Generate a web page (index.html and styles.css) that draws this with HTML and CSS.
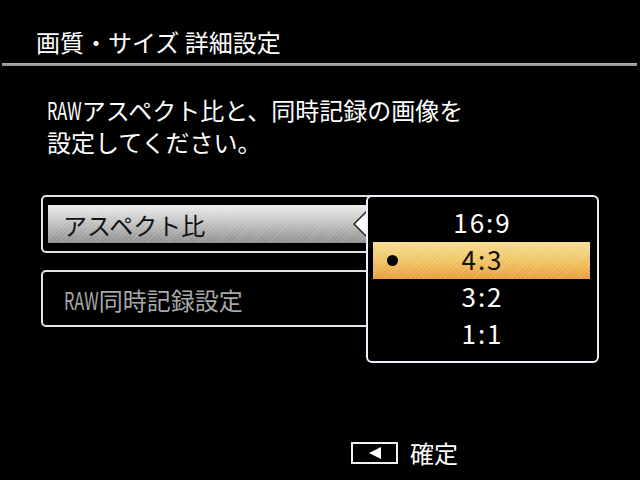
FILE: index.html
```html
<!DOCTYPE html>
<html lang="ja">
<head>
  <meta charset="UTF-8">
  <meta name="viewport" content="width=device-width, initial-scale=1.0">
  <title>画質・サイズ 詳細設定</title>
  <link rel="stylesheet" href="styles.css">
</head>
<body>
  <div class="screen">
    <header class="title-bar">
      <h1>画質・サイズ 詳細設定</h1>
    </header>
    <div class="rule"></div>

    <p class="intro"><span class="hw">RAW</span>アスペクト比と、同時記録の画像を<br>設定してください。</p>

    <div class="menu">
      <div class="item selected">
        <div class="item-bar">アスペクト比</div>
      </div>
      <div class="item">
        <div class="item-bar dim"><span class="hw">RAW</span>同時記録設定</div>
      </div>

      <!-- pointer from the selected row into the popup -->
      <svg class="pointer" width="16" height="28" viewBox="0 0 16 28">
        <path d="M15 1 L2 14 L15 27 Z" fill="#fff" stroke="#222" stroke-width="1.5" stroke-linejoin="round"/>
      </svg>

      <div class="popup">
        <div class="option">16:9</div>
        <div class="option active"><span class="dot"></span>4:3</div>
        <div class="option">3:2</div>
        <div class="option">1:1</div>
      </div>
    </div>

    <footer class="hint">
      <span class="key">
        <svg width="14" height="14" viewBox="0 0 14 14"><path d="M1 7 L13 1 L13 13 Z" fill="#fff"/></svg>
      </span>
      <span class="hint-label">確定</span>
    </footer>
  </div>
</body>
</html>
```

FILE: styles.css
```css
body {
  margin: 0;
  background-color: #000;
  color: #f2f2f2;
  font-family: "Noto Sans CJK JP", "Noto Sans", sans-serif;
}

.screen {
  width: 640px;
  height: 480px;
  overflow: hidden;
  display: flex;
  flex-direction: column;
}

.title-bar {
  padding: 30px 0 0 36px;
}

h1 {
  margin: 0;
  font-size: 24px;
  line-height: 24px;
  font-weight: normal;
  color: #fff;
}

.rule {
  margin: 9px 3px 0 2px;
  height: 3px;
  background: linear-gradient(#b4b0b8, #8a8790);
}

.intro {
  margin: 28px 0 0 47px;
  font-size: 24px;
  line-height: 32px;
  color: #fff;
}

/* narrow half-width latin like the camera font */
.hw {
  display: inline-block;
  transform: scaleX(0.68);
  transform-origin: left center;
  margin-right: -16px;
}

.menu {
  position: relative;
  margin: 37px 0 0 41px;
  display: flex;
  flex-direction: column;
  gap: 17px;
}

.item {
  width: 339px;
  box-sizing: border-box;
  border: 2px solid #e4e4e4;
  border-radius: 5px;
  padding: 8px 0 8px 5px;
}

.item + .item {
  height: 57px;
}

.item-bar {
  height: 38px;
  display: flex;
  align-items: center;
  padding-left: 15px;
  font-size: 24px;
  color: #111;
}

.selected .item-bar {
  background:
    repeating-linear-gradient(135deg, rgba(255, 255, 255, 0.14) 0 1px, transparent 1px 3px),
    linear-gradient(#ececec, #c4c4c4 45%, #8e8e8e);
}

.item-bar.dim {
  color: #a8a8a8;
  padding-left: 16px;
}

.pointer {
  position: absolute;
  left: 311px;
  top: 15px;
}

.popup {
  position: absolute;
  left: 325px;
  top: 0;
  width: 233px;
  height: 168px;
  box-sizing: border-box;
  border: 2px solid #eef0ff;
  border-radius: 6px;
  background-color: #000;
  padding: 8px 7px 0 5px;
  z-index: 2;
}

.option {
  position: relative;
  height: 37px;
  box-sizing: border-box;
  padding: 0 0 4px 2px;
  display: flex;
  align-items: center;
  justify-content: center;
  font-size: 26px;
  letter-spacing: 2px;
  color: #fff;
}

.option.active {
  color: #111;
  background:
    repeating-linear-gradient(135deg, rgba(255, 255, 255, 0.16) 0 1px, transparent 1px 3px),
    linear-gradient(#f6dc92, #f0c463 50%, #e99d38);
}

.dot {
  position: absolute;
  left: 14px;
  top: 13px;
  width: 11px;
  height: 11px;
  border-radius: 50%;
  background-color: #000;
}

.hint {
  margin-top: auto;
  padding: 0 0 15px 351px;
  display: flex;
  align-items: center;
  gap: 12px;
}

.key {
  width: 47px;
  height: 22px;
  box-sizing: border-box;
  border: 2px solid #f2f2f2;
  display: flex;
  align-items: center;
  justify-content: center;
}

.hint-label {
  font-size: 24px;
  line-height: 24px;
  color: #fff;
}
```
